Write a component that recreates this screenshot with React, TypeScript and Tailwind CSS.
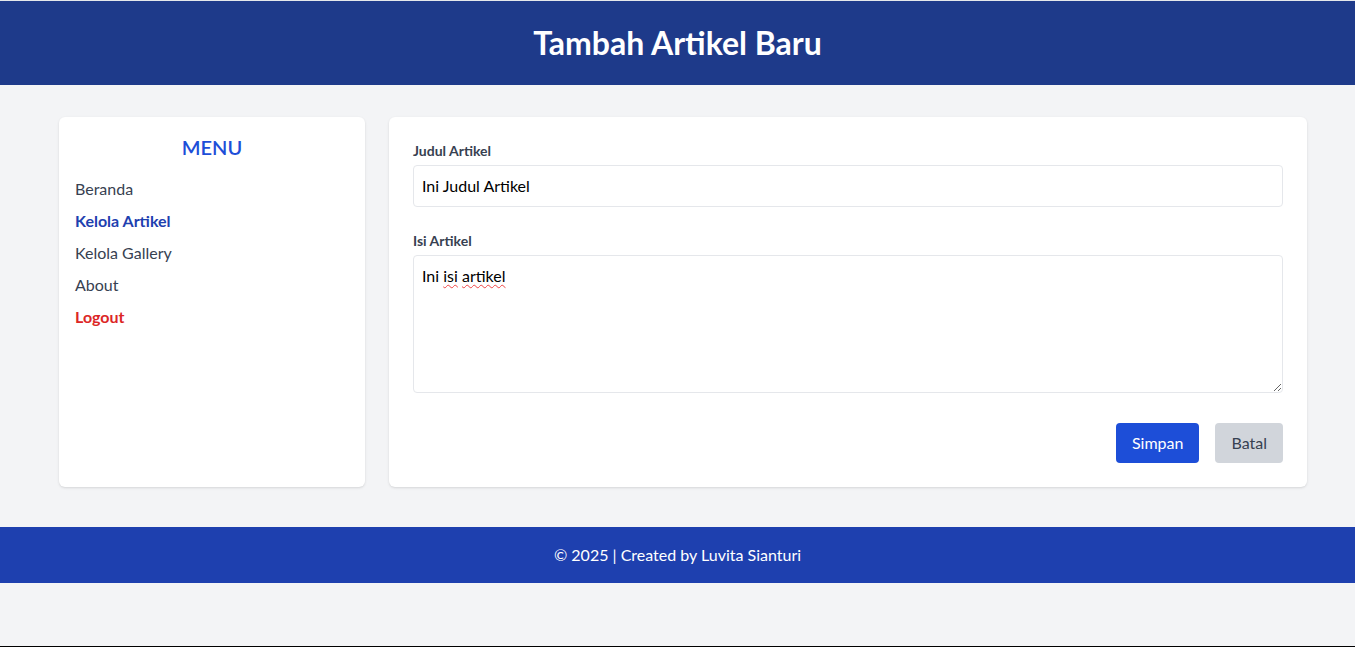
const menu = [
  { label: "Beranda", cls: "text-[#374151]" },
  { label: "Kelola Artikel", cls: "text-[#1e40af] font-bold" },
  { label: "Kelola Gallery", cls: "text-[#374151]" },
  { label: "About", cls: "text-[#374151]" },
  { label: "Logout", cls: "text-[#dc2626] font-bold" },
];

const App = () => {
  return (
    <div
      className="min-h-screen flex flex-col bg-[#f3f4f6] text-gray-900"
      style={{ fontFamily: "Lato, 'Noto Sans', sans-serif" }}
    >
      <header className="bg-[#1e3a8a] border-t border-gray-200 py-6 text-center">
        <h1 className="text-[32px] font-bold text-white leading-9">
          Tambah Artikel Baru
        </h1>
      </header>

      <main className="flex gap-6 pl-[59px] pr-[48px] pt-8 pb-10">
        <aside className="w-[306px] shrink-0 bg-white rounded-md shadow-sm p-4">
          <h2 className="text-xl font-semibold text-[#1d4ed8] text-center mb-4">
            MENU
          </h2>
          <ul className="space-y-2">
            {menu.map((item) => (
              <li key={item.label}>
                <a href="#" className={item.cls}>
                  {item.label}
                </a>
              </li>
            ))}
          </ul>
        </aside>

        <section className="flex-1 bg-white rounded-md shadow-sm p-6">
          <div className="mb-6">
            <label className="block text-sm font-bold text-[#374151] mb-1">
              Judul Artikel
            </label>
            <input
              type="text"
              defaultValue="Ini Judul Artikel"
              className="block w-full border border-[#e5e7eb] rounded px-2 py-2 outline-none text-black"
            />
          </div>
          <div>
            <label className="block text-sm font-bold text-[#374151] mb-1">
              Isi Artikel
            </label>
            <div className="relative">
              <textarea
                rows={5}
                defaultValue="Ini isi artikel"
                spellCheck={false}
                className="block w-full border border-[#e5e7eb] rounded px-2 py-2 outline-none text-black"
              />
              {/* spellcheck squiggle */}
              <div className="absolute inset-0 px-[9px] py-[9px] pointer-events-none text-transparent select-none">
                Ini{" "}
                <span className="underline decoration-wavy decoration-[#ef4444] decoration-1 underline-offset-2">
                  isi
                </span>{" "}
                <span className="underline decoration-wavy decoration-[#ef4444] decoration-1 underline-offset-2">
                  artikel
                </span>
              </div>
            </div>
          </div>
          <div className="flex justify-end gap-4 mt-[30px]">
            <button className="bg-[#1d4ed8] text-white px-4 py-2 rounded">
              Simpan
            </button>
            <button className="bg-[#d1d5db] text-[#374151] px-4 py-2 rounded">
              Batal
            </button>
          </div>
        </section>
      </main>

      <footer className="bg-[#1e40af] text-white text-center py-4">
        © 2025 | Created by Luvita Sianturi
      </footer>
      <div className="flex-1" />
      <div className="h-px bg-black" />
    </div>
  );
};

export default App;
